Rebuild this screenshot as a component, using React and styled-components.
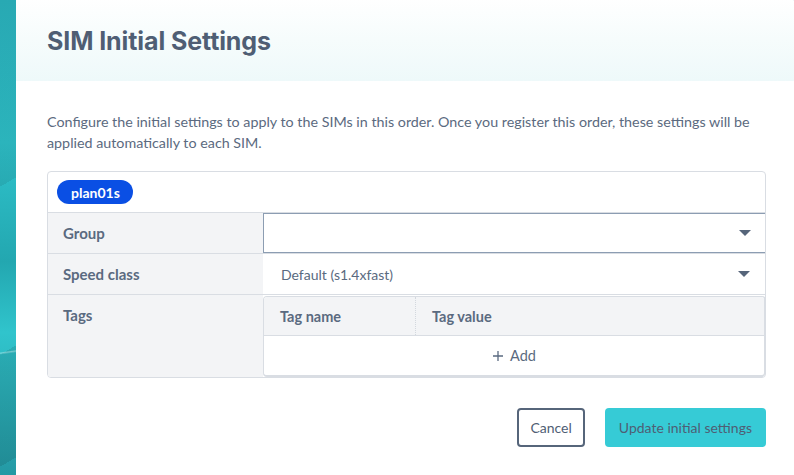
import React from "react";
import styled, { createGlobalStyle } from "styled-components";

const Global = createGlobalStyle`
  html, body { margin: 0; padding: 0; height: 100%; overflow: hidden; }
  body {
    font-family: "Source Sans Pro", "Lato", "Noto Sans", sans-serif;
    background:
      linear-gradient(172deg, transparent 0 60%, rgba(255,255,255,0.35) 60.2%, transparent 60.5%),
      linear-gradient(150deg, rgba(0,0,0,0.08) 0 20%, transparent 20% 38%, rgba(0,0,0,0.10) 38% 50%, transparent 50% 70%, rgba(0,0,0,0.08) 70% 100%),
      linear-gradient(180deg, #2bb7c2 0%, #2fc3cc 30%, #23a7b0 55%, #30c4cc 70%, #2499a4 100%);
  }
  #root { height: 100%; }
`;

const Page = styled.div`
  display: flex;
  height: 100%;
  padding-left: 16px;
  box-sizing: border-box;
`;

const Modal = styled.div`
  flex: 1;
  margin-top: -2px;
  margin-right: -2px;
  background: #ffffff;
  border-top-right-radius: 8px;
  display: flex;
  flex-direction: column;
`;

const Header = styled.div`
  height: 83px;
  box-sizing: border-box;
  padding: 0 31px;
  display: flex;
  align-items: center;
  border-top-right-radius: 8px;
  background: linear-gradient(180deg, #ffffff 0%, #f6fcfc 50%, #eef9fa 100%);
`;

const Title = styled.h1`
  margin: 0;
  padding-top: 2px;
  font-family: "Inter", "Liberation Sans", sans-serif;
  font-weight: 700;
  font-size: 25px;
  letter-spacing: -0.1px;
  color: #4f5e74;
`;

const Body = styled.div`
  padding: 30px 30px 0 31px;
  display: flex;
  flex-direction: column;
`;

const Description = styled.p`
  margin: 0;
  font-size: 14.3px;
  line-height: 21px;
  color: #5b6a80;
`;

const Card = styled.div`
  margin-top: 18px;
  border: 1px solid #d9dde3;
  border-radius: 4px;
  overflow: hidden;
`;

const CardTop = styled.div`
  height: 40px;
  padding: 0 9px;
  display: flex;
  align-items: center;
  border-bottom: 1px solid #d9dde3;
`;

const Pill = styled.span`
  display: inline-flex;
  align-items: center;
  height: 24px;
  padding: 0 13px 0 14px;
  border-radius: 12px;
  background: #0a4fe4;
  color: #ffffff;
  font-weight: 700;
  font-size: 14px;
`;

const Row = styled.div`
  display: grid;
  grid-template-columns: 215px 1fr;
  border-bottom: ${(p) => (p.$last ? "none" : "1px solid #d9dde3")};
`;

const Label = styled.div`
  background: #f3f4f6;
  padding: ${(p) => (p.$top ? "11px 15px" : "0 15px")};
  display: flex;
  align-items: ${(p) => (p.$top ? "flex-start" : "center")};
  height: ${(p) => (p.$top ? "auto" : "40px")};
  box-sizing: border-box;
  font-weight: 700;
  font-size: 15px;
  color: #5a6a80;
`;

const Select = styled.div`
  height: 40px;
  box-sizing: border-box;
  display: flex;
  align-items: center;
  justify-content: space-between;
  padding: 0 14px 0 17px;
  border: ${(p) => (p.$focused ? "1px solid #8c9db2" : "1px solid transparent")};
  margin: ${(p) => (p.$focused ? "0 -1px 0 0" : "0")};
  font-size: 14px;
  color: #5a6a80;
  background: #ffffff;
`;

const Caret = styled.span`
  width: 0;
  height: 0;
  border-left: 6px solid transparent;
  border-right: 6px solid transparent;
  border-top: 6px solid #56657a;
`;

const TagCell = styled.div`
  padding: 1px 0 0 0;
  background: #ffffff;
`;

const TagTable = styled.div`
  border: 1px solid #d9dde3;
  border-right-width: 2px;
  border-bottom-width: 2px;
  border-radius: 4px;
  margin-right: -1px;
  overflow: hidden;
`;

const TagHead = styled.div`
  display: grid;
  grid-template-columns: 151px 1fr;
  height: 38px;
  background: #f3f4f6;
  border-bottom: 1px solid #d9dde3;
`;

const TagTh = styled.div`
  display: flex;
  align-items: center;
  padding: 0 16px;
  font-weight: 700;
  font-size: 14.5px;
  color: #5a6a80;
  border-left: ${(p) => (p.$divided ? "1px dotted #d3d8de" : "none")};
`;

const AddRow = styled.div`
  height: 39px;
  display: flex;
  align-items: center;
  justify-content: center;
  gap: 6px;
  font-size: 14.5px;
  color: #5a6a80;
`;

const Footer = styled.div`
  display: flex;
  justify-content: flex-end;
  gap: 20px;
  margin-top: 30px;
`;

const Button = styled.button`
  height: 39px;
  box-sizing: border-box;
  border-radius: 4px;
  font-family: inherit;
  font-size: 14px;
  color: #4f5e74;
  cursor: pointer;
  padding: ${(p) => (p.$primary ? "0 14px" : "0 11px")};
  border: ${(p) => (p.$primary ? "none" : "2px solid #56657a")};
  background: ${(p) => (p.$primary ? "#36cbd6" : "#ffffff")};
`;

export default function App() {
  return (
    <>
      <Global />
      <Page>
        <Modal>
          <Header>
            <Title>SIM Initial Settings</Title>
          </Header>
          <Body>
            <Description>
              Configure the initial settings to apply to the SIMs in this order. Once you register this order, these
              settings will be applied automatically to each SIM.
            </Description>
            <Card>
              <CardTop>
                <Pill>plan01s</Pill>
              </CardTop>
              <Row>
                <Label>Group</Label>
                <Select $focused>
                  <span />
                  <Caret />
                </Select>
              </Row>
              <Row>
                <Label>Speed class</Label>
                <Select>
                  <span>Default (s1.4xfast)</span>
                  <Caret />
                </Select>
              </Row>
              <Row $last>
                <Label $top>Tags</Label>
                <TagCell>
                  <TagTable>
                    <TagHead>
                      <TagTh>Tag name</TagTh>
                      <TagTh $divided>Tag value</TagTh>
                    </TagHead>
                    <AddRow>
                      <svg width="12" height="12" viewBox="0 0 12 12">
                        <path d="M6 1v10M1 6h10" stroke="#5a6a80" strokeWidth="1.3" />
                      </svg>
                      <span>Add</span>
                    </AddRow>
                  </TagTable>
                </TagCell>
              </Row>
            </Card>
            <Footer>
              <Button>Cancel</Button>
              <Button $primary>Update initial settings</Button>
            </Footer>
          </Body>
        </Modal>
      </Page>
    </>
  );
}
